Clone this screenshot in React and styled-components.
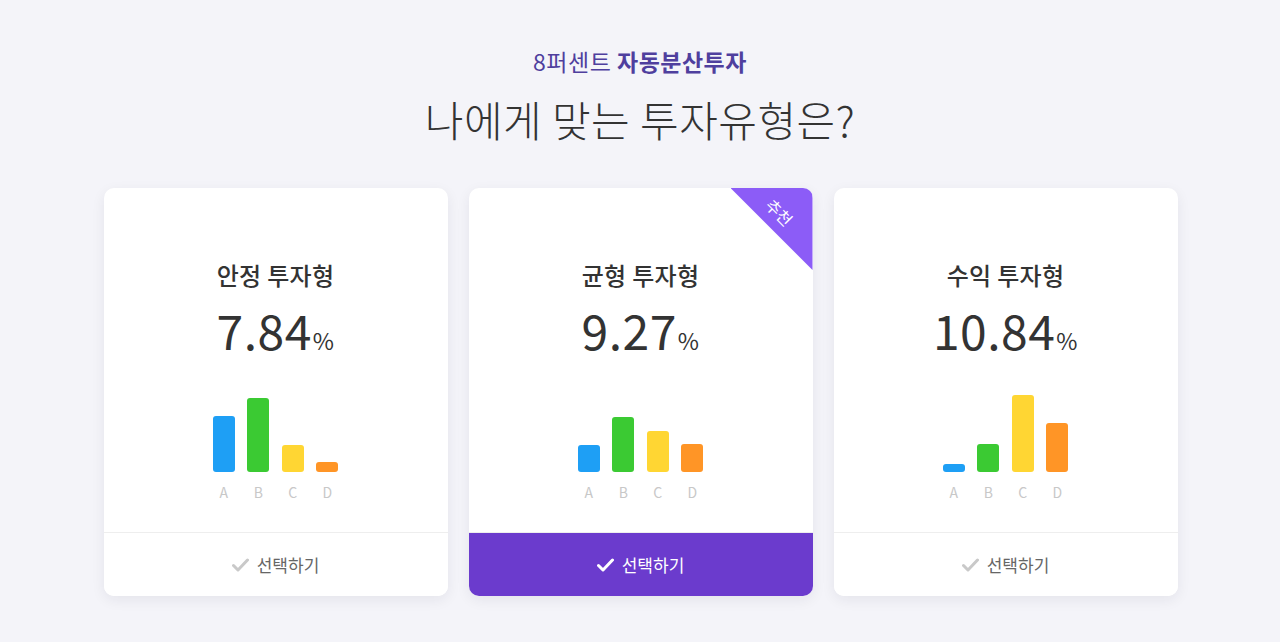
import React from 'react'
import styled, { createGlobalStyle } from 'styled-components'

const GlobalStyle = createGlobalStyle`
  body {
    margin: 0;
    background: #f4f4f9;
    font-family: "Noto Sans CJK KR", "Noto Sans", sans-serif;
    color: #333;
  }
`

const COLORS = ['#1e9ff5', '#3bca33', '#ffd633', '#ff9526']
const LABELS = ['A', 'B', 'C', 'D']

const plans = [
  { name: '안정 투자형', rate: '7.84', bars: [56, 74, 27, 10] },
  { name: '균형 투자형', rate: '9.27', bars: [27, 55, 41, 28], recommended: true },
  { name: '수익 투자형', rate: '10.84', bars: [8, 28, 77, 49] },
]

const Check = ({ color }) => (
  <svg width="17" height="14" viewBox="0 0 17 14">
    <path d="M1.5 7.5 L6 12 L15.5 2" fill="none" stroke={color} strokeWidth="3" strokeLinecap="round" strokeLinejoin="round" />
  </svg>
)

const App = () => {
  return (
    <Page>
      <GlobalStyle />
      <Header>
        <Sub>8퍼센트 <b>자동분산투자</b></Sub>
        <Title>나에게 맞는 투자유형은?</Title>
      </Header>
      <Cards>
        {plans.map((p) => (
          <Card key={p.name}>
            {p.recommended && (
              <Ribbon>
                <RibbonText>추천</RibbonText>
              </Ribbon>
            )}
            <Body>
              <Name>{p.name}</Name>
              <Rate>
                {p.rate}<small>%</small>
              </Rate>
              <Chart>
                {p.bars.map((h, i) => (
                  <Bar key={i} $color={COLORS[i]} style={{ height: h }} />
                ))}
              </Chart>
              <Labels>
                {LABELS.map((l) => (
                  <span key={l}>{l}</span>
                ))}
              </Labels>
            </Body>
            <Select $active={p.recommended}>
              <Check color={p.recommended ? '#fff' : '#c9c9c9'} />
              선택하기
            </Select>
          </Card>
        ))}
      </Cards>
    </Page>
  )
}

const Page = styled.div`
  min-height: 642px;
  padding-top: 46px;
  box-sizing: border-box;
`

const Header = styled.header`
  display: flex;
  flex-direction: column;
  align-items: center;
`

const Sub = styled.div`
  font-size: 23px;
  line-height: 30px;
  color: #4f3f9e;
  letter-spacing: 0.5px;
  b {
    font-weight: 700;
  }
`

const Title = styled.h1`
  margin: 16px 0 0;
  font-size: 42px;
  line-height: 54px;
  font-weight: 300;
  color: #333;
  letter-spacing: 0.5px;
`

const Cards = styled.div`
  display: flex;
  justify-content: center;
  gap: 21px;
  margin-top: 42px;
  padding-left: 1px;
`

const Card = styled.div`
  position: relative;
  width: 344px;
  height: 408px;
  background: #fff;
  border-radius: 10px;
  overflow: hidden;
  box-shadow: 0 4px 14px rgba(30, 30, 60, 0.07);
  display: flex;
  flex-direction: column;
`

const Ribbon = styled.div`
  position: absolute;
  top: 0;
  right: 0;
  width: 82px;
  height: 82px;
  background: #8c5cf7;
  clip-path: polygon(0 0, 100% 0, 100% 100%);
`

const RibbonText = styled.span`
  position: absolute;
  left: 34px;
  top: 14px;
  color: #fff;
  font-size: 16px;
  line-height: 20px;
  transform: rotate(45deg);
`

const Body = styled.div`
  height: 345px;
  box-sizing: border-box;
  padding-top: 70px;
  display: flex;
  flex-direction: column;
  align-items: center;
  border-bottom: 1px solid #eeeeee;
`

const Name = styled.div`
  font-size: 24px;
  line-height: 34px;
  font-weight: 500;
  color: #333;
  letter-spacing: 0.3px;
`

const Rate = styled.div`
  margin-top: 7px;
  font-size: 48px;
  line-height: 60px;
  color: #333;
  letter-spacing: 0.5px;
  small {
    font-size: 23px;
    margin-left: 1px;
  }
`

const Chart = styled.div`
  margin-top: 22px;
  height: 80px;
  display: grid;
  grid-template-columns: repeat(4, 22px);
  column-gap: 12.5px;
  align-items: end;
`

const Bar = styled.div`
  background: ${(p) => p.$color};
  border-radius: 3px;
`

const Labels = styled.div`
  margin-top: 10px;
  display: grid;
  grid-template-columns: repeat(4, 22px);
  column-gap: 12.5px;
  span {
    text-align: center;
    font-size: 14px;
    line-height: 20px;
    color: #c8c8c8;
  }
`

const Select = styled.div`
  flex: 1;
  display: flex;
  align-items: center;
  justify-content: center;
  gap: 8px;
  font-size: 17px;
  background: ${(p) => (p.$active ? '#6b3bcd' : '#fff')};
  color: ${(p) => (p.$active ? '#fff' : '#666')};
`

export default App
